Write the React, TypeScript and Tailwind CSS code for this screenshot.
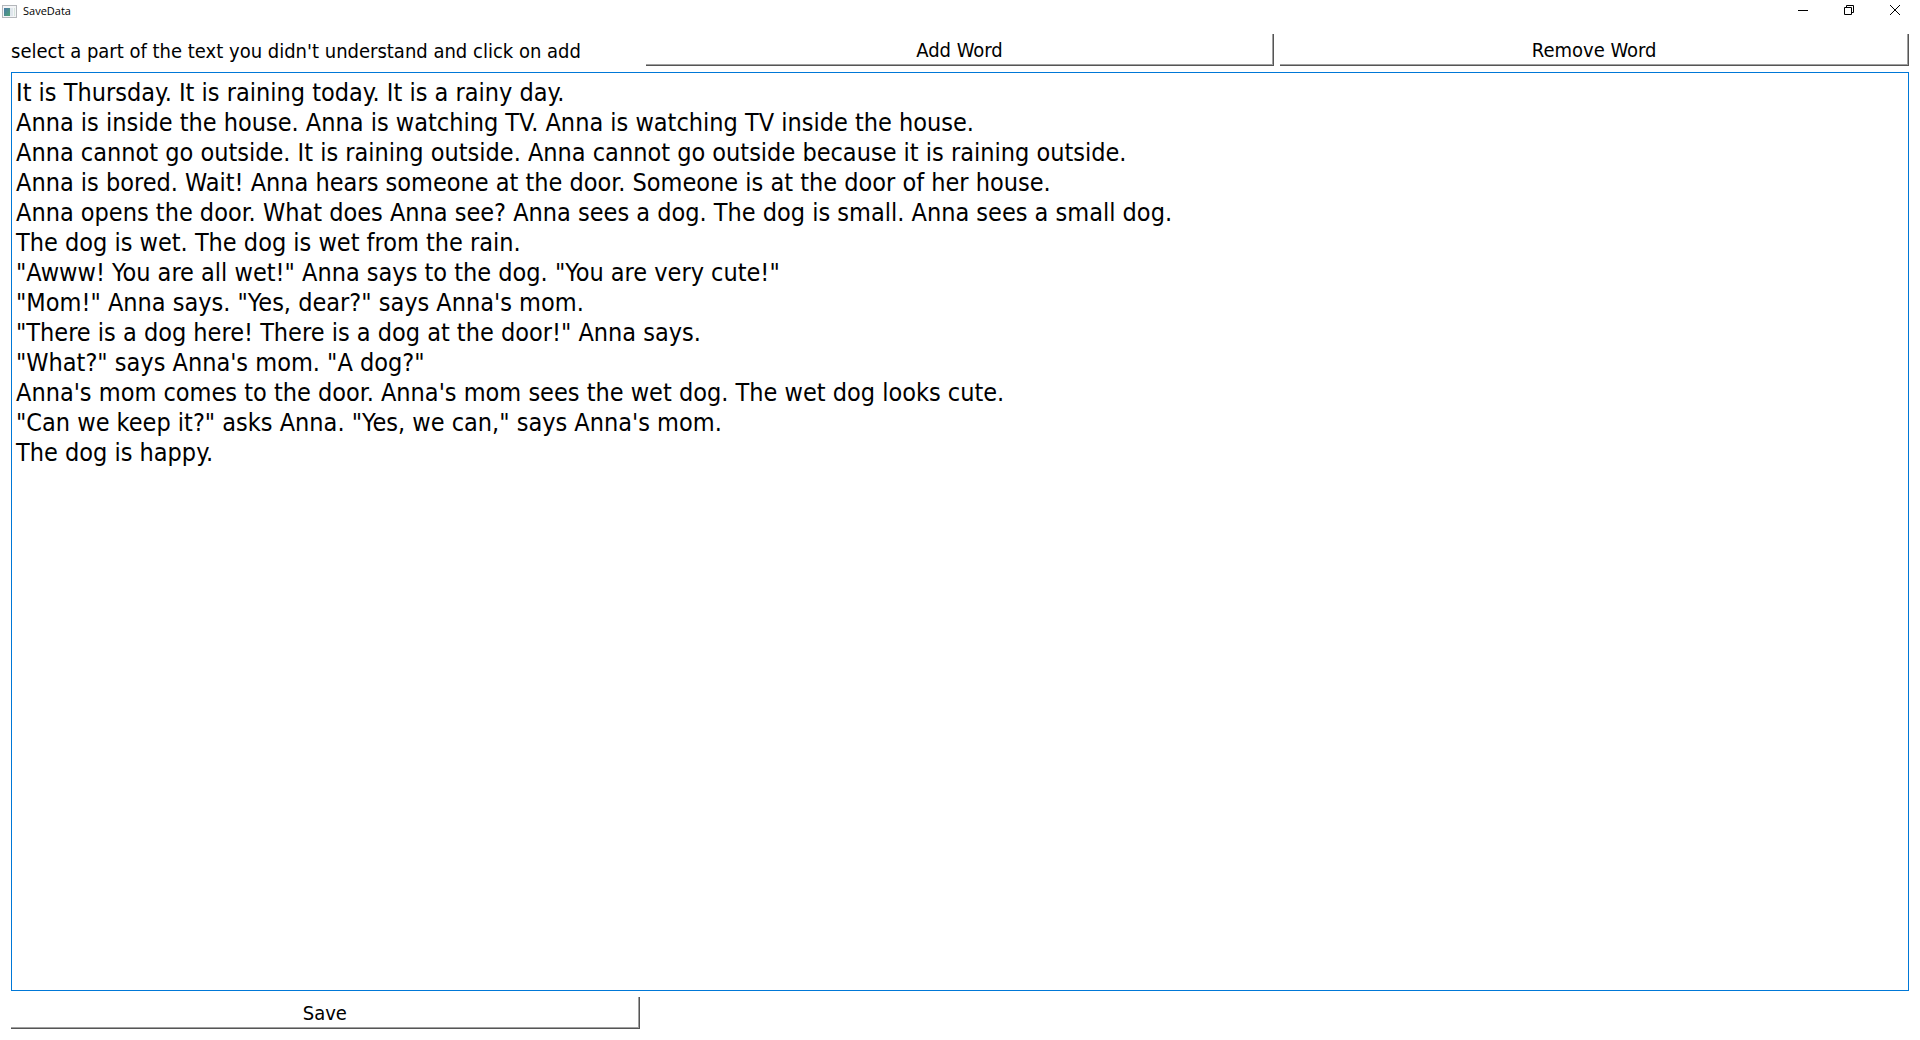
import type { ReactNode } from "react";

const story = `It is Thursday. It is raining today. It is a rainy day.
Anna is inside the house. Anna is watching TV. Anna is watching TV inside the house.
Anna cannot go outside. It is raining outside. Anna cannot go outside because it is raining outside.
Anna is bored. Wait! Anna hears someone at the door. Someone is at the door of her house.
Anna opens the door. What does Anna see? Anna sees a dog. The dog is small. Anna sees a small dog.
The dog is wet. The dog is wet from the rain.
"Awww! You are all wet!" Anna says to the dog. "You are very cute!"
"Mom!" Anna says. "Yes, dear?" says Anna's mom.
"There is a dog here! There is a dog at the door!" Anna says.
"What?" says Anna's mom. "A dog?"
Anna's mom comes to the door. Anna's mom sees the wet dog. The wet dog looks cute.
"Can we keep it?" asks Anna. "Yes, we can," says Anna's mom.
The dog is happy.`;

function PushButton({ children }: { children: ReactNode }) {
  return (
    <button
      type="button"
      className="h-8 border-r border-b border-[#555555] bg-white pt-px text-center shadow-[inset_-1px_-1px_0_#a0a0a0]"
    >
      {children}
    </button>
  );
}

function CaptionButton({ label, children }: { label: string; children: ReactNode }) {
  return (
    <button type="button" aria-label={label} className="flex h-full w-[46px] items-center justify-center">
      <svg width="10" height="10" viewBox="0 0 10 10" fill="none" stroke="black" aria-hidden="true">
        {children}
      </svg>
    </button>
  );
}

function AppIcon() {
  return (
    <svg width="15" height="13" viewBox="0 0 15 13" aria-hidden="true">
      <defs>
        <linearGradient id="pane" x1="0" y1="0" x2="1" y2="1">
          <stop offset="0" stopColor="#4a78a8" />
          <stop offset="1" stopColor="#4fa374" />
        </linearGradient>
      </defs>
      <rect x="0.5" y="0.5" width="14" height="12" fill="#f4f5f7" stroke="#b4b7bb" />
      <rect x="2" y="3" width="6" height="8" fill="url(#pane)" />
      <rect x="8" y="3" width="3" height="8" fill="#dfe6ec" />
      <rect x="12" y="3" width="1" height="8" fill="#d5e5dd" />
    </svg>
  );
}

export default function App() {
  return (
    <div className="flex h-screen flex-col bg-white font-['DejaVu_Sans_Condensed','DejaVu_Sans',sans-serif] text-black">
      <header className="flex h-[23px] shrink-0 items-start justify-between pr-0.5 pl-0.5">
        <div className="flex h-[22px] items-center gap-1.5">
          <AppIcon />
          <h1 className="font-['Open_Sans',sans-serif] text-[11px] leading-4">SaveData</h1>
        </div>
        <div className="flex h-5 items-center">
          <CaptionButton label="Minimize">
            <path d="M0 5.5h10" />
          </CaptionButton>
          <CaptionButton label="Restore">
            <path d="M0.5 2.5h7v7h-7zM2.5 2.5v-2h7v7h-2" />
          </CaptionButton>
          <CaptionButton label="Close">
            <path d="M0 0l10 10M10 0L0 10" />
          </CaptionButton>
        </div>
      </header>
      <main className="flex flex-1 flex-col gap-1.5 p-[11px] text-xl leading-6">
        <div className="grid grid-cols-3 items-center gap-1.5">
          <label htmlFor="story" className="pt-px whitespace-nowrap">
            select a part of the text you didn't understand and click on add
          </label>
          <PushButton>Add Word</PushButton>
          <PushButton>Remove Word</PushButton>
        </div>
        <textarea
          id="story"
          spellCheck={false}
          defaultValue={story}
          className="w-full flex-1 resize-none border border-[#0078d7] bg-white px-1 pt-[5px] pb-1 text-[25px] leading-[30px] outline-none"
        />
        <div className="grid grid-cols-3 gap-1.5">
          <PushButton>Save</PushButton>
        </div>
      </main>
    </div>
  );
}
